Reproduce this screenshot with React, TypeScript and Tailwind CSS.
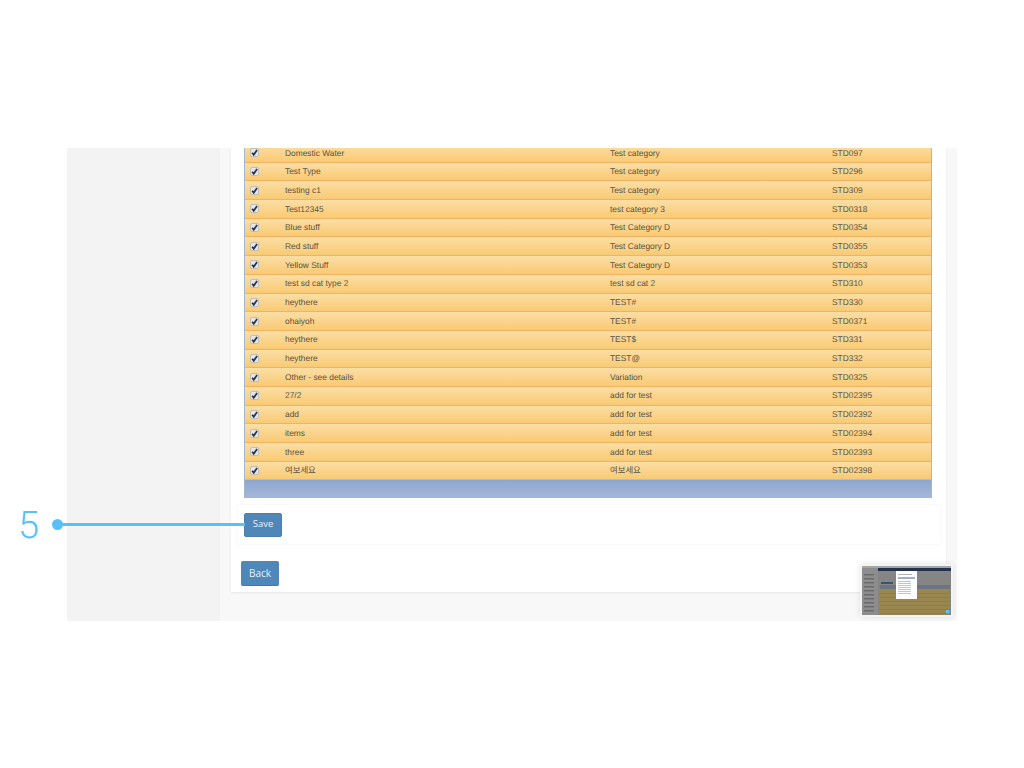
const rows = [
  ['Domestic Water', 'Test category', 'STD097'],
  ['Test Type', 'Test category', 'STD296'],
  ['testing c1', 'Test category', 'STD309'],
  ['Test12345', 'test category 3', 'STD0318'],
  ['Blue stuff', 'Test Category D', 'STD0354'],
  ['Red stuff', 'Test Category D', 'STD0355'],
  ['Yellow Stuff', 'Test Category D', 'STD0353'],
  ['test sd cat type 2', 'test sd cat 2', 'STD310'],
  ['heythere', 'TEST#', 'STD330'],
  ['ohaiyoh', 'TEST#', 'STD0371'],
  ['heythere', 'TEST$', 'STD331'],
  ['heythere', 'TEST@', 'STD332'],
  ['Other - see details', 'Variation', 'STD0325'],
  ['27/2', 'add for test', 'STD02395'],
  ['add', 'add for test', 'STD02392'],
  ['items', 'add for test', 'STD02394'],
  ['three', 'add for test', 'STD02393'],
  ['여보세요', '여보세요', 'STD02398'],
]

const sideLines = [8, 12, 16, 20, 24, 28, 32, 36, 40, 44]
const tanLines = [27, 31, 35, 39, 43, 47]

const Checkbox = () => (
  <span className="flex h-[9px] w-[9px] items-center justify-center rounded-[2px] border border-[#bdbdbd] bg-[#e6e6e6]">
    <svg viewBox="0 0 10 10" className="h-[9px] w-[9px] shrink-0">
      <path d="M2.4 5.2 4.2 7.6 7.8 2.2" fill="none" stroke="#26303f" strokeWidth="1.9" />
    </svg>
  </span>
)

const Thumbnail = () => (
  <div className="absolute left-[860px] top-[564px] h-[53px] w-[93px] bg-[#f4f4f4] p-[2px] shadow-[0_0_6px_rgba(0,0,0,0.1)]">
    <svg viewBox="0 0 89 49" className="h-full w-full blur-[0.4px]" preserveAspectRatio="none">
      <rect width="89" height="49" fill="#858585" />
      <rect width="89" height="2" fill="#a6a6a6" />
      <rect y="2" x="16" width="73" height="3" fill="#25324f" />
      <rect y="2" width="16" height="47" fill="#8d8d8d" />
      {sideLines.map(y => (
        <rect key={y} x="2" y={y} width="10" height="1.4" fill="#6a6a6a" />
      ))}
      <rect x="19" y="16" width="12" height="2" fill="#36566e" />
      <rect x="18" y="19" width="70" height="4" fill="#6d7582" />
      <rect x="18" y="23" width="70" height="26" fill="#9a8750" />
      {tanLines.map(y => (
        <rect key={y} x="18" y={y} width="70" height="0.6" fill="#86753f" />
      ))}
      <rect x="34" y="5" width="21" height="28" fill="#ffffff" />
      <rect x="36" y="8" width="14" height="1" fill="#b5b5b5" />
      <rect x="36" y="11" width="17" height="2" fill="#9db2d2" />
      {[15, 17, 19, 21, 23, 25, 27].map(y => (
        <rect key={y} x="36" y={y} width="13" height="1" fill="#c4c4c4" />
      ))}
      <rect x="84" y="44" width="3.4" height="3.4" fill="#5bc0f8" />
    </svg>
  </div>
)

export default function App() {
  return (
    <div className="relative h-[768px] w-[1024px] overflow-hidden bg-white pt-[148px] font-['Liberation_Sans','Noto_Sans_CJK_KR',sans-serif] [text-rendering:geometricPrecision]">
      <div className="ml-[67px] flex h-[473px] w-[890px] overflow-hidden">
        <aside className="w-[153px] shrink-0 bg-[#f3f3f3]" />
        <main className="flex-1 bg-[#f8f8f8] pl-[11px]">
          <div className="-mt-[4px] w-[715px] bg-white px-[6px] pb-[6px] shadow-[0_1px_2px_rgba(0,0,0,0.07)]">
            <div className="bg-white pb-[5px] pl-[7px] pr-[7px]">
              <div className="w-[688px] border-x border-b border-[#a3b6d0]">
                {rows.map((row, i) => (
                  <div
                    key={i}
                    className="grid h-[18.7px] grid-cols-[40px_325px_222px_1fr] items-center border-b border-[#f2b264] bg-gradient-to-b from-[#fbdea5] to-[#f9ca72] text-[8.4px] text-[#5a5240]"
                  >
                    <span className="flex pl-[5px]">
                      <Checkbox />
                    </span>
                    <span>{row[0]}</span>
                    <span>{row[1]}</span>
                    <span>{row[2]}</span>
                  </div>
                ))}
                <div className="h-[17px] bg-gradient-to-b from-[#8ea6cf] to-[#a3b7d8]" />
              </div>
            </div>
            <div className="mt-[2px] bg-white px-[7px] pb-[7px] pt-[6px] shadow-[0_0_2px_rgba(0,0,0,0.07)]">
              <button className="h-[24px] w-[38px] rounded-[2px] border border-[#4a80af] bg-[#4f87b8] font-['Open_Sans',sans-serif] text-[9.5px] text-[#eaf1f7]">
                Save
              </button>
            </div>
            <div className="pl-[4px] pt-[17px]">
              <button className="h-[25px] w-[38px] rounded-[2px] border-b border-[#4279a8] bg-[#4f87b8] font-['Open_Sans',sans-serif] text-[10px] text-[#eaf1f7]">
                Back
              </button>
            </div>
          </div>
        </main>
      </div>

      <span className="absolute left-[18px] top-[504px] font-['Roboto',sans-serif] text-[38px] font-light leading-[44px] text-[#5bc0f8]">
        5
      </span>
      <div className="absolute left-[58px] top-[523px] h-[3px] w-[187px] bg-[#5bc0f8]" />
      <div className="absolute left-[52px] top-[519px] h-[11px] w-[11px] rounded-full bg-[#5bc0f8]" />
      <Thumbnail />
    </div>
  )
}
